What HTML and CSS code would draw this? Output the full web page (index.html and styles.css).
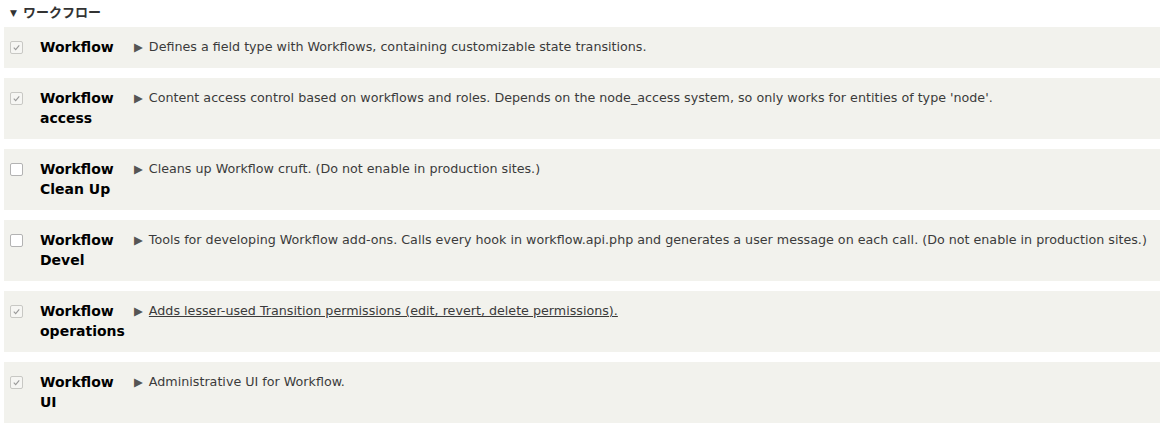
FILE: index.html
```html
<!DOCTYPE html>
<html lang="ja">
<head>
    <meta charset="UTF-8">
    <title>ワークフロー</title>
    <link rel="stylesheet" href="styles.css">
</head>
<body>
    <div class="package">
        <div class="package-title"><span class="toggle">&#9660;</span>ワークフロー</div>

        <div class="module">
            <span class="check checked"><svg viewBox="0 0 12 12"><path d="M3 6.2 L5.1 8.3 L9 3.6"/></svg></span>
            <div class="module-name">Workflow</div>
            <div class="module-desc"><span class="arrow">&#9654;</span>Defines a field type with Workflows, containing customizable state transitions.</div>
        </div>

        <div class="module">
            <span class="check checked"><svg viewBox="0 0 12 12"><path d="M3 6.2 L5.1 8.3 L9 3.6"/></svg></span>
            <div class="module-name">Workflow access</div>
            <div class="module-desc"><span class="arrow">&#9654;</span>Content access control based on workflows and roles. Depends on the node_access system, so only works for entities of type 'node'.</div>
        </div>

        <div class="module">
            <span class="check"></span>
            <div class="module-name">Workflow Clean Up</div>
            <div class="module-desc"><span class="arrow">&#9654;</span>Cleans up Workflow cruft. (Do not enable in production sites.)</div>
        </div>

        <div class="module">
            <span class="check"></span>
            <div class="module-name">Workflow Devel</div>
            <div class="module-desc"><span class="arrow">&#9654;</span>Tools for developing Workflow add-ons. Calls every hook in workflow.api.php and generates a user message on each call. (Do not enable in production sites.)</div>
        </div>

        <div class="module">
            <span class="check checked"><svg viewBox="0 0 12 12"><path d="M3 6.2 L5.1 8.3 L9 3.6"/></svg></span>
            <div class="module-name">Workflow operations</div>
            <div class="module-desc"><span class="arrow">&#9654;</span><a href="#" class="desc-link">Adds lesser-used Transition permissions (edit, revert, delete permissions).</a></div>
        </div>

        <div class="module">
            <span class="check checked"><svg viewBox="0 0 12 12"><path d="M3 6.2 L5.1 8.3 L9 3.6"/></svg></span>
            <div class="module-name">Workflow UI</div>
            <div class="module-desc"><span class="arrow">&#9654;</span>Administrative UI for Workflow.</div>
        </div>
    </div>
</body>
</html>
```

FILE: styles.css
```css
body {
    margin: 0;
    padding: 0;
    background-color: #fff;
    font-family: "DejaVu Sans", "Noto Sans CJK JP", sans-serif;
    color: #333;
}

.package {
    padding: 0 4px;
}

.package-title {
    font-size: 13px;
    font-weight: bold;
    color: #333;
    padding: 2px 0 0 6px;
    height: 27px;
    box-sizing: border-box;
}

.toggle {
    font-size: 9px;
    margin-right: 6px;
    vertical-align: 1px;
}

.module {
    display: flex;
    align-items: flex-start;
    background-color: #f2f2ed;
    padding: 10px 0 11px;
    margin-bottom: 10px;
}

.check {
    flex: none;
    width: 11px;
    height: 11px;
    margin: 4px 0 0 6px;
    border: 1px solid #b3b3b3;
    border-radius: 2px;
    background-color: #fff;
}

.check.checked {
    background-color: #f6f6f3;
    border-color: #c8c8c4;
}

.check svg {
    display: block;
    width: 11px;
    height: 11px;
}

.check svg path {
    fill: none;
    stroke: #9a9a9a;
    stroke-width: 1.2;
}

.module-name {
    flex: none;
    width: 94px;
    margin-left: 17px;
    font-size: 14px;
    font-weight: bold;
    line-height: 20px;
    color: #000;
}

.module-desc {
    font-size: 12.7px;
    line-height: 20px;
    color: #3b3b3b;
}

.arrow {
    font-size: 11.5px;
    color: #555;
    margin-right: 6px;
    vertical-align: 0;
}

.desc-link {
    color: #3b3b3b;
    text-decoration: underline;
}
```
